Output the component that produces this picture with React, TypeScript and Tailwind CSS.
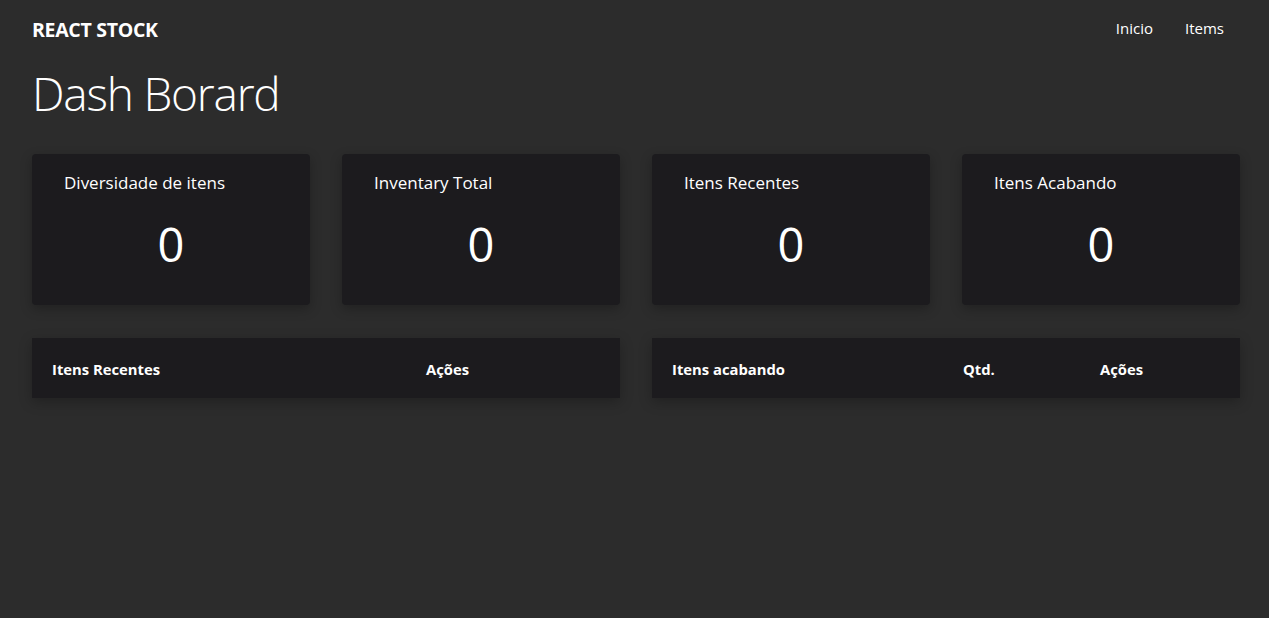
const cards = [
  { title: "Diversidade de itens", value: 0 },
  { title: "Inventary Total", value: 0 },
  { title: "Itens Recentes", value: 0 },
  { title: "Itens Acabando", value: 0 },
];

export default function App() {
  return (
    <div
      className="min-h-screen bg-[#2c2c2c] text-white pl-8 pr-[29px]"
      style={{ fontFamily: '"Open Sans", "Noto Sans", sans-serif' }}
    >
      {/* Header */}
      <header className="flex items-center justify-between h-[60px]">
        <h1 className="text-[19.5px] font-bold tracking-[-0.3px]">REACT STOCK</h1>
        <nav className="flex items-center gap-8 pr-4 pb-[3px] text-[15px]">
          <a href="#">Inicio</a>
          <a href="#">Items</a>
        </nav>
      </header>

      <h2 className="text-[46px] font-light leading-none mt-[10px] tracking-[-1.2px]">
        Dash Borard
      </h2>

      {/* Summary cards */}
      <div className="grid grid-cols-4 gap-8 mt-[38px]">
        {cards.map((card) => (
          <div
            key={card.title}
            className="h-[151px] bg-[#1c1b1e] rounded-[4px] shadow-[0_4px_12px_rgba(0,0,0,0.25)] px-8 pt-[16px]"
          >
            <p className="text-[17px]">{card.title}</p>
            <p className="text-center text-[47px] leading-none mt-[25px]">
              {card.value}
            </p>
          </div>
        ))}
      </div>

      {/* Tables */}
      <div className="grid grid-cols-2 gap-8 mt-[33px]">
        <div className="h-[60px] bg-[#1c1b1e] shadow-[0_4px_12px_rgba(0,0,0,0.25)] px-5 pt-[2px] grid grid-cols-[374px_1fr] items-center text-[14.8px] font-bold">
          <span>Itens Recentes</span>
          <span>Ações</span>
        </div>
        <div className="h-[60px] bg-[#1c1b1e] shadow-[0_4px_12px_rgba(0,0,0,0.25)] px-5 pt-[2px] grid grid-cols-[291px_137px_1fr] items-center text-[14.8px] font-bold">
          <span>Itens acabando</span>
          <span>Qtd.</span>
          <span>Ações</span>
        </div>
      </div>
    </div>
  );
}
